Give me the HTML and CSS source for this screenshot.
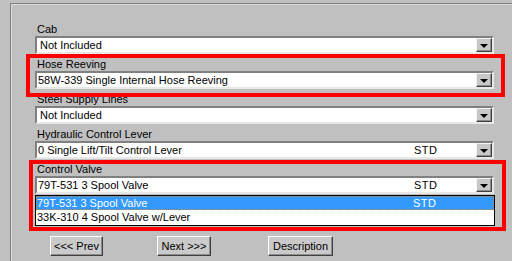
FILE: index.html
```html
<!DOCTYPE html>
<html>
<head>
<meta charset="utf-8">
<link rel="stylesheet" href="styles.css">
</head>
<body>
<div class="panel">
  <div class="group">
    <div class="label">Cab</div>
    <div class="combo"><span class="cb-text">Not Included</span><span class="cb-std"></span><span class="cb-btn"><i class="arrow"></i></span></div>
  </div>
  <div class="group">
    <div class="label">Hose Reeving</div>
    <div class="combo"><span class="cb-text tight">58W-339 Single Internal Hose Reeving</span><span class="cb-std"></span><span class="cb-btn"><i class="arrow"></i></span></div>
  </div>
  <div class="group">
    <div class="label">Steel Supply Lines</div>
    <div class="combo"><span class="cb-text">Not Included</span><span class="cb-std"></span><span class="cb-btn"><i class="arrow"></i></span></div>
  </div>
  <div class="group">
    <div class="label">Hydraulic Control Lever</div>
    <div class="combo"><span class="cb-text tight">0 Single Lift/Tilt Control Lever</span><span class="cb-std">STD</span><span class="cb-btn"><i class="arrow"></i></span></div>
  </div>
  <div class="group open">
    <div class="label">Control Valve</div>
    <div class="combo"><span class="cb-text tight">79T-531 3 Spool Valve</span><span class="cb-std">STD</span><span class="cb-btn"><i class="arrow"></i></span></div>
    <div class="droplist">
      <div class="row sel"><span class="r-text">79T-531 3 Spool Valve</span><span class="r-std">STD</span></div>
      <div class="row"><span class="r-text">33K-310 4 Spool Valve w/Lever</span><span class="r-std"></span></div>
    </div>
  </div>
  <div class="buttons">
    <button class="btn prev">&lt;&lt;&lt; Prev</button>
    <button class="btn next">Next &gt;&gt;&gt;</button>
    <button class="btn desc">Description</button>
  </div>
</div>
<div class="mark mark1"></div>
<div class="mark mark2"></div>
</body>
</html>
```

FILE: styles.css
```css
html, body {
  margin: 0;
  padding: 0;
  background: #c0c0c0;
  width: 512px;
  height: 261px;
  overflow: hidden;
  font-family: "Liberation Sans", Arial, sans-serif;
  font-size: 11px;
  color: #000;
}

.panel {
  box-sizing: border-box;
  margin: 3px 0 0 10px;
  border-top: 1px solid #808080;
  border-left: 1px solid #808080;
  box-shadow: inset 1px 1px 0 #dcdcdc;
  padding: 18px 0 0 24px;
  height: 258px;
}

.group {
  position: relative;
  width: 459px;
  margin-bottom: 3px;
}

.label {
  height: 14px;
  line-height: 14px;
  padding-left: 2px;
  white-space: nowrap;
}

.combo {
  box-sizing: border-box;
  height: 18px;
  width: 459px;
  background: #fff;
  border-top: 2px solid #808080;
  border-left: 2px solid #808080;
  border-bottom: 2px solid #e8e8e8;
  border-right: 2px solid #e8e8e8;
  display: flex;
  align-items: center;
}

.cb-text {
  flex: 1;
  padding-left: 3px;
  line-height: 14px;
  white-space: nowrap;
}
.cb-text.tight { padding-left: 1px; }

.cb-std {
  width: 62px;
  line-height: 14px;
  letter-spacing: 0.5px;
}

.cb-btn {
  box-sizing: border-box;
  width: 16px;
  height: 14px;
  background: #c8c8c8;
  border-top: 1px solid #f4f4f4;
  border-left: 1px solid #f4f4f4;
  border-bottom: 1px solid #404040;
  border-right: 1px solid #404040;
  box-shadow: inset -1px -1px 0 #8c8c8c;
  display: flex;
  align-items: center;
  justify-content: center;
}

.arrow {
  width: 0;
  height: 0;
  border-left: 4px solid transparent;
  border-right: 4px solid transparent;
  border-top: 4px solid #000;
  margin-top: 1px;
}

.droplist {
  position: absolute;
  left: 0;
  top: 33px;
  box-sizing: border-box;
  width: 460px;
  height: 31px;
  background: #fff;
  border: 1px solid #000;
  z-index: 2;
}

.row {
  height: 14px;
  line-height: 14px;
  display: flex;
  white-space: nowrap;
}
.row .r-text { flex: 1; padding-left: 1px; }
.row .r-std { width: 81px; letter-spacing: 0.5px; }
.row.sel {
  background: #3399ff;
  color: #fff;
  outline: 1px dotted #c8864a;
  outline-offset: -1px;
}

.buttons {
  display: flex;
  margin-top: 42px;
  padding-left: 15px;
}

.btn {
  box-sizing: border-box;
  height: 20px;
  padding: 0;
  font-family: "Liberation Sans", Arial, sans-serif;
  font-size: 11px;
  color: #000;
  background: #cacaca;
  border-top: 1px solid #ffffff;
  border-left: 1px solid #ffffff;
  border-bottom: 1px solid #404040;
  border-right: 1px solid #404040;
  box-shadow: inset -1px -1px 0 #8c8c8c;
}
.btn.prev { width: 53px; }
.btn.next { width: 54px; margin-left: 54px; }
.btn.desc { width: 65px; margin-left: 57px; }

.mark {
  position: absolute;
  box-sizing: border-box;
  border: 4px solid #ff0000;
  z-index: 5;
}
.mark1 { left: 26px; top: 54px; width: 479px; height: 43px; }
.mark2 { left: 29px; top: 160px; width: 477px; height: 71px; }
```
